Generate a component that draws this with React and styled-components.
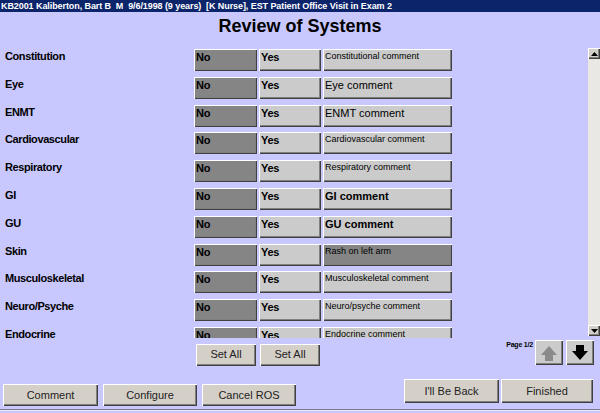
import React from "react";
import styled, { createGlobalStyle, css } from "styled-components";

const GlobalStyle = createGlobalStyle`
  html, body { margin: 0; padding: 0; background: #c8c8ff; }
  body { font-family: "Liberation Sans", Arial, sans-serif; }
  * { box-sizing: border-box; }
`;

const bevel = css`
  box-shadow: inset 1px 1px 0 #ffffff, inset -1px -1px 0 #404040,
    inset -2px -2px 0 #808080;
`;

const Screen = styled.div`
  width: 600px;
  height: 413px;
  background: #c8c8ff;
  display: flex;
  flex-direction: column;
  overflow: hidden;
  color: #000;
`;

const TitleBar = styled.div`
  height: 12px;
  background: #0c246a;
  color: #fff;
  font-weight: bold;
  font-size: 9px;
  line-height: 12px;
  letter-spacing: -0.08px;
  padding-left: 1px;
  white-space: pre;
  overflow: hidden;
`;

const Heading = styled.h1`
  margin: 0;
  height: 34px;
  padding-top: 3px;
  font-size: 18px;
  line-height: 22px;
  font-weight: bold;
  text-align: center;
`;

const Body = styled.div`
  display: flex;
  height: 292px;
  padding-top: 2px;
`;

const List = styled.div`
  flex: 1;
  overflow: hidden;
  display: grid;
  grid-auto-rows: 22px;
  row-gap: 5.8px;
  align-content: start;
  padding-top: 1px;
`;

const Row = styled.div`
  display: grid;
  grid-template-columns: 187px 63px 62px 129px;
  column-gap: 2px;
  padding-left: 5px;
`;

const Label = styled.div`
  align-self: start;
  padding-top: 1px;
  font-size: 11px;
  line-height: 13px;
  font-weight: bold;
  letter-spacing: -0.4px;
  white-space: nowrap;
`;

const Toggle = styled.div`
  ${bevel};
  background: ${(p) => (p.$dark ? "#858585" : "#cbcbcb")};
  font-size: 11px;
  line-height: 13px;
  font-weight: bold;
  letter-spacing: -0.3px;
  padding: 2px 2px 0;
`;

const Comment = styled.div`
  ${bevel};
  background: ${(p) => (p.$dark ? "#858585" : "#cbcbcb")};
  padding: 2px 2px 0;
  white-space: nowrap;
  overflow: hidden;
  font-size: ${(p) => (p.$size === "small" ? "9px" : "11px")};
  line-height: ${(p) => (p.$size === "small" ? "11px" : "13px")};
  font-weight: ${(p) => (p.$bold ? "bold" : "normal")};
`;

const Scrollbar = styled.div`
  width: 12px;
  height: 288px;
  display: flex;
  flex-direction: column;
  background: #eae8e4;
`;

const ScrollArrow = styled.div`
  ${bevel};
  height: 11px;
  background: #d4d0c8;
  display: flex;
  align-items: center;
  justify-content: center;
`;

const ScrollTrack = styled.div`
  flex: 1;
`;

const Controls = styled.div`
  height: 27px;
  display: flex;
  align-items: flex-start;
  padding-left: 196px;
  padding-right: 6px;
  gap: 4px;
`;

const SetAll = styled.div`
  ${bevel};
  width: 60px;
  height: 22px;
  margin-top: 6px;
  background: #d4d0c8;
  font-size: 11px;
  line-height: 21px;
  text-align: center;
  color: #222;
`;

const Pager = styled.div`
  margin-left: auto;
  display: flex;
  align-items: flex-start;
  gap: 3px;
`;

const PageLabel = styled.div`
  font-size: 7px;
  font-weight: bold;
  margin-top: 3px;
  margin-right: -1px;
  letter-spacing: -0.2px;
`;

const PageButton = styled.div`
  ${bevel};
  width: 28px;
  height: 25px;
  margin-top: 2px;
  background: #cbcbcb;
  display: flex;
  align-items: center;
  justify-content: center;
`;

const Footer = styled.div`
  height: 44px;
  display: flex;
  justify-content: space-between;
  padding: 0 7px 0 3px;
`;

const ButtonGroup = styled.div`
  display: flex;
  gap: ${(p) => p.$gap}px;
  padding-top: ${(p) => p.$top}px;
`;

const ActionButton = styled.div`
  ${bevel};
  width: ${(p) => p.$w}px;
  height: ${(p) => p.$h}px;
  background: #d4d0c8;
  font-size: 11px;
  line-height: ${(p) => p.$h}px;
  text-align: center;
  color: #222;
`;

const Rule = styled.div`
  height: 2px;
  border-top: 1px solid #7c7c8c;
  border-bottom: 1px solid #e8e8f4;
`;

const rows = [
  { label: "Constitution", comment: "Constitutional comment", size: "small" },
  { label: "Eye", comment: "Eye comment", size: "large" },
  { label: "ENMT", comment: "ENMT comment", size: "large" },
  { label: "Cardiovascular", comment: "Cardiovascular comment", size: "small" },
  { label: "Respiratory", comment: "Respiratory comment", size: "small" },
  { label: "GI", comment: "GI comment", size: "large", bold: true },
  { label: "GU", comment: "GU comment", size: "large", bold: true },
  { label: "Skin", comment: "Rash on left arm", size: "small", dark: true },
  { label: "Musculoskeletal", comment: "Musculoskeletal comment", size: "small" },
  { label: "Neuro/Psyche", comment: "Neuro/psyche comment", size: "small" },
  { label: "Endocrine", comment: "Endocrine comment", size: "small" },
];

const SmallTriangle = ({ down }) => (
  <svg width="7" height="4" viewBox="0 0 7 4">
    <polygon points={down ? "0,0 7,0 3.5,4" : "0,4 7,4 3.5,0"} fill="#000" />
  </svg>
);

const BlockArrow = ({ down, color }) => (
  <svg width="18" height="16" viewBox="0 0 18 16">
    <polygon
      points={
        down
          ? "5,0 13,0 13,6 17,6 9,15 1,6 5,6"
          : "5,16 13,16 13,10 17,10 9,1 1,10 5,10"
      }
      fill={color}
    />
  </svg>
);

export default function App() {
  return (
    <>
      <GlobalStyle />
      <Screen>
        <TitleBar>
          {"KB2001 Kaliberton, Bart B  M  9/6/1998 (9 years)  [K Nurse], EST Patient Office Visit in Exam 2"}
        </TitleBar>
        <Heading>Review of Systems</Heading>
        <Body>
          <List>
            {rows.map((r) => (
              <Row key={r.label}>
                <Label>{r.label}</Label>
                <Toggle $dark>No</Toggle>
                <Toggle>Yes</Toggle>
                <Comment $size={r.size} $bold={r.bold} $dark={r.dark}>
                  {r.comment}
                </Comment>
              </Row>
            ))}
          </List>
          <Scrollbar>
            <ScrollArrow>
              <SmallTriangle />
            </ScrollArrow>
            <ScrollTrack />
            <ScrollArrow>
              <SmallTriangle down />
            </ScrollArrow>
          </Scrollbar>
        </Body>
        <Controls>
          <SetAll>Set All</SetAll>
          <SetAll>Set All</SetAll>
          <Pager>
            <PageLabel>Page 1/2</PageLabel>
            <PageButton>
              <BlockArrow color="#8a8a8a" />
            </PageButton>
            <PageButton>
              <BlockArrow down color="#000" />
            </PageButton>
          </Pager>
        </Controls>
        <Footer>
          <ButtonGroup $gap={5} $top={19}>
            <ActionButton $w={95} $h={22}>Comment</ActionButton>
            <ActionButton $w={94} $h={22}>Configure</ActionButton>
            <ActionButton $w={94} $h={22}>Cancel ROS</ActionButton>
          </ButtonGroup>
          <ButtonGroup $gap={2} $top={14}>
            <ActionButton $w={95} $h={24}>I'll Be Back</ActionButton>
            <ActionButton $w={92} $h={24}>Finished</ActionButton>
          </ButtonGroup>
        </Footer>
        <Rule />
      </Screen>
    </>
  );
}
